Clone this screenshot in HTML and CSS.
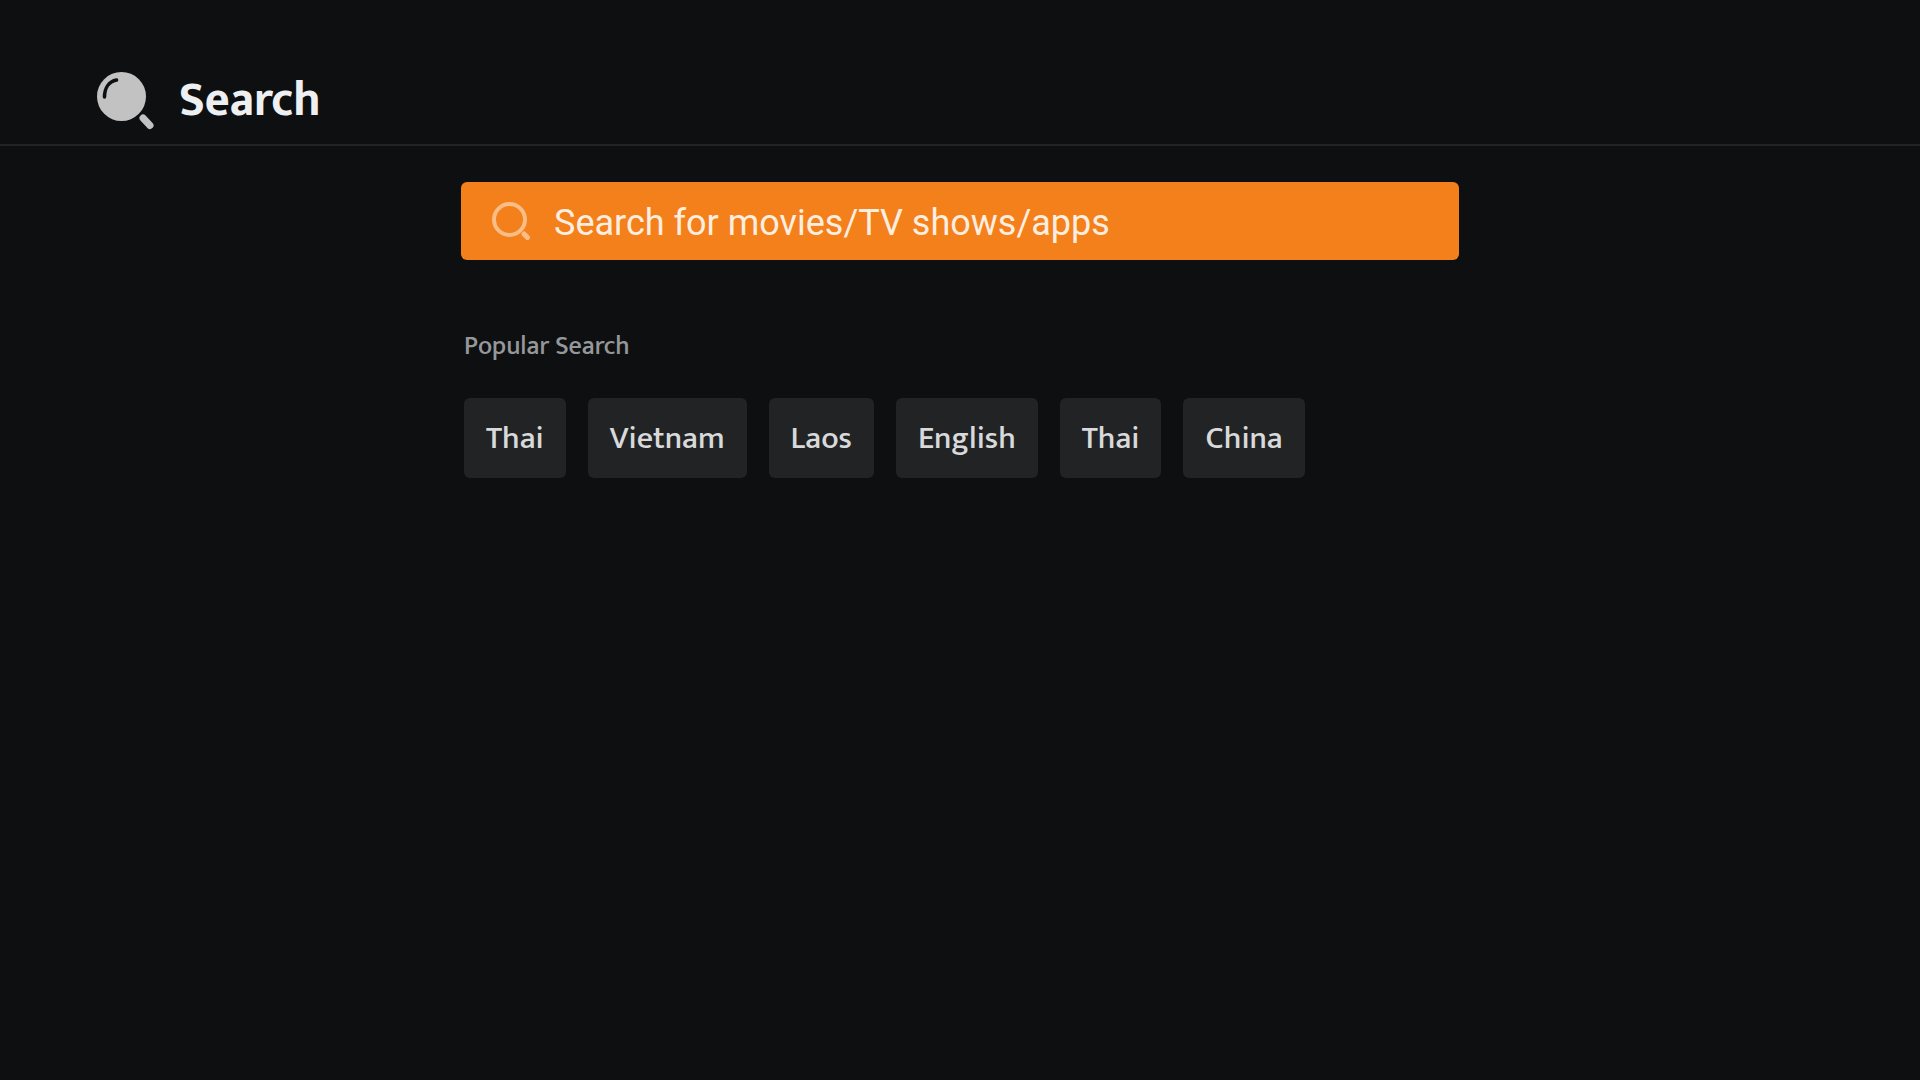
FILE: index.html
```
<!doctype html>
<html lang="en">
<head>
<meta charset="utf-8">
<meta name="viewport" content="width=device-width, initial-scale=1.0">
<title>Search</title>
<link rel="stylesheet" href="styles.css">
</head>
<body>
<header class="header">
    <svg class="header-icon" viewBox="0 0 58 58" aria-hidden="true">
        <circle cx="24.500" cy="24.500" r="24.500" fill="#c2c2c2"/>
        <path d="M7.500 25C7.500 16 12 9.500 19.500 8" fill="none" stroke="#0e0f11" stroke-width="3.600" stroke-linecap="round"/>
        <path d="M46 46L53 53.500" fill="none" stroke="#c2c2c2" stroke-width="7" stroke-linecap="round"/>
    </svg>
    <h1>Search</h1>
</header>
<main class="content">
    <form class="search-box" role="search">
        <svg class="search-icon" viewBox="0 0 38 38" aria-hidden="true">
            <circle cx="17.500" cy="17.500" r="15.500" fill="none" stroke="#f9bd85" stroke-width="4"/>
            <path d="M32 32L35.500 35.500" fill="none" stroke="#f9bd85" stroke-width="5" stroke-linecap="round"/>
        </svg>
        <input id="search_term" type="text" autocomplete="off" aria-label="Search" placeholder="Search for movies/TV shows/apps">
    </form>
    <section class="popular">
        <h2>Popular Search</h2>
        <div class="tags">
            <button type="button">Thai</button>
            <button type="button">Vietnam</button>
            <button type="button">Laos</button>
            <button type="button">English</button>
            <button type="button">Thai</button>
            <button type="button">China</button>
        </div>
    </section>
</main>
</body>
</html>
```
FILE: styles.css
```
* {
    box-sizing: border-box;
}
body {
    margin: 0;
    background-color: #0e0f11;
    color: #eeeff1;
    font-family: Mukta, "Noto Sans", sans-serif;
}
h1, h2 {
    margin: 0;
}
.header {
    display: flex;
    align-items: center;
    gap: 24px;
    padding: 65px 97px 7px;
    border-bottom: 2px solid #222326;
}
.header-icon {
    width: 58px;
    height: 58px;
}
.header h1 {
    font-size: 48px;
    font-weight: 700;
    line-height: 72px;
}
.content {
    width: 90%;
    max-width: 998px;
    margin: 36px auto 0;
}
.search-box {
    display: flex;
    align-items: center;
    gap: 24px;
    height: 78px;
    padding: 0 31px;
    border-radius: 6px;
    background-color: #f3801b;
}
.search-icon {
    flex: none;
    width: 38px;
    height: 38px;
}
.search-box input {
    flex: 1;
    min-width: 0;
    padding: 4px 0 0;
    border: 0;
    outline: 0;
    background: transparent;
    color: #fdeee0;
    font: 36px Roboto, sans-serif;
}
.search-box input::placeholder {
    color: #fdeee0;
    opacity: 1;
}
.popular {
    padding: 69px 3px 0;
}
.popular h2 {
    color: #96979a;
    font-size: 26px;
    font-weight: 500;
    line-height: 36px;
}
.tags {
    display: flex;
    flex-wrap: wrap;
    gap: 22px;
    margin-top: 33px;
}
.tags button {
    height: 80px;
    padding: 0 22px;
    border: 0;
    border-radius: 6px;
    background-color: #222325;
    color: #d8d9da;
    font-family: inherit;
    font-size: 32px;
    font-weight: 500;
}
```
